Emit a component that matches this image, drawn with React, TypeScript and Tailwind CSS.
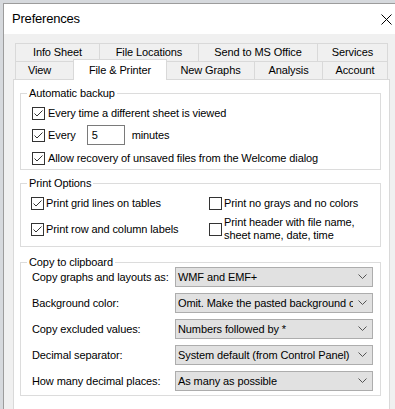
import type { ReactNode } from "react";

function Check({ checked }: { checked: boolean }) {
  return (
    <span className="flex h-[13px] w-[13px] shrink-0 items-center justify-center border border-[#333333] bg-white">
      {checked && (
        <svg width="11" height="11" viewBox="0 0 11 11">
          <path d="M1.5 5.5 L4 8 L9.5 2.5" fill="none" stroke="#333333" strokeWidth="1" />
        </svg>
      )}
    </span>
  );
}

function Group({ title, className, children }: { title: string; className: string; children: ReactNode }) {
  return (
    <div className={`relative w-[361px] border border-[#dcdcdc] ${className}`}>
      <span className="absolute -top-[9px] left-[6px] bg-white px-[2px] leading-[16px]">{title}</span>
      {children}
    </div>
  );
}

function Dropdown({ value }: { value: string }) {
  return (
    <div className="flex h-[20px] w-[198px] items-center border border-[#adadad] bg-[#e1e1e1]">
      <span className="flex-1 overflow-hidden whitespace-nowrap pl-[2px]">{value}</span>
      <svg className="mx-[5px] shrink-0" width="9" height="6" viewBox="0 0 9 6">
        <path d="M0.5 0.5 L4.5 4.5 L8.5 0.5" fill="none" stroke="#555555" strokeWidth="1" />
      </svg>
    </div>
  );
}

const topTabs = [
  { label: "Info Sheet", w: "w-[84px]" },
  { label: "File Locations", w: "w-[99px]" },
  { label: "Send to MS Office", w: "w-[119px]" },
  { label: "Services", w: "w-[71px]" },
];

const clipboardRows = [
  { label: "Copy graphs and layouts as:", value: "WMF and EMF+" },
  { label: "Background color:", value: "Omit. Make the pasted background clear" },
  { label: "Copy excluded values:", value: "Numbers followed by *" },
  { label: "Decimal separator:", value: "System default (from Control Panel)" },
  { label: "How many decimal places:", value: "As many as possible" },
];

export default function App() {
  return (
    <div className="h-[409px] w-[395px] overflow-hidden bg-[#d6d9dd] pl-[3px] pt-[3px] font-['Liberation_Sans',Arial,sans-serif] text-[11px] tracking-[-0.1px] text-black">
      <div className="flex h-full flex-col border-l border-t border-[#9c9c9c] bg-[#f0f0f0]">
        <div className="flex h-[30px] shrink-0 items-center justify-between bg-white pl-[8px] pr-[3px]">
          <span className="text-[13px] tracking-[-0.2px]">Preferences</span>
          <svg width="11" height="11" viewBox="0 0 11 11">
            <path d="M0.5 0.5 L10.5 10.5 M10.5 0.5 L0.5 10.5" stroke="#000000" strokeWidth="1" />
          </svg>
        </div>

        <div className="flex flex-1 flex-col pl-[9px] pt-[9px]">
          <div className="ml-[2px] flex h-[18px] w-[373px]">
            {topTabs.map((t, i) => (
              <div
                key={t.label}
                className={`flex items-center justify-center border-l border-t border-[#d9d9d9] ${t.w} ${i === topTabs.length - 1 ? "border-r" : ""}`}
              >
                {t.label}
              </div>
            ))}
          </div>
          <div className="ml-[2px] flex h-[18px] w-[373px] items-start">
            <div className="flex h-[18px] w-[58px] items-center justify-center border-l border-t border-[#d9d9d9] pr-[10px]">View</div>
            <div className="relative z-10 -mt-[2px] flex h-[21px] w-[94px] items-start justify-center border-x border-t border-[#d9d9d9] bg-white pt-[2px]">
              File &amp; Printer
            </div>
            <div className="flex h-[18px] w-[87px] items-center justify-center border-t border-[#d9d9d9]">New Graphs</div>
            <div className="flex h-[18px] w-[68px] items-center justify-center border-l border-t border-[#d9d9d9]">Analysis</div>
            <div className="flex h-[18px] w-[66px] items-center justify-center border-x border-t border-[#d9d9d9]">Account</div>
          </div>

          <div className="flex w-[377px] flex-1 flex-col border border-b-0 border-[#d9d9d9] bg-white pl-[6px]">
            <Group title="Automatic backup" className="mt-[13px] pl-[11px] pt-[8px]">
              <div className="flex h-[22px] items-center gap-[3px]">
                <Check checked />
                <span>Every time a different sheet is viewed</span>
              </div>
              <div className="flex h-[22px] items-center">
                <Check checked />
                <span className="ml-[3px]">Every</span>
                <div className="ml-[11px] flex h-[20px] w-[38px] items-center border border-[#7a7a7a] bg-white pl-[4px]">5</div>
                <span className="ml-[7px]">minutes</span>
              </div>
              <div className="mt-[2px] flex h-[21px] items-center gap-[3px]">
                <Check checked />
                <span>Allow recovery of unsaved files from the Welcome dialog</span>
              </div>
            </Group>

            <Group title="Print Options" className="mt-[13px] grid grid-cols-[178px_1fr] pb-[3px] pl-[10px] pt-[8px]">
              <div className="flex h-[23px] items-center gap-[2px]">
                <Check checked />
                <span>Print grid lines on tables</span>
              </div>
              <div className="flex h-[23px] items-center gap-[2px]">
                <Check checked={false} />
                <span>Print no grays and no colors</span>
              </div>
              <div className="flex h-[28px] items-center gap-[2px]">
                <Check checked />
                <span>Print row and column labels</span>
              </div>
              <div className="flex h-[28px] items-center gap-[2px]">
                <Check checked={false} />
                <span className="leading-[13px]">
                  Print header with file name,
                  <br />
                  sheet name, date, time
                </span>
              </div>
            </Group>

            <Group title="Copy to clipboard" className="mt-[15px] flex flex-col gap-[6px] pb-[4px] pl-[11px] pt-[4px]">
              {clipboardRows.map((r) => (
                <div key={r.label} className="flex items-center">
                  <span className="w-[143px]">{r.label}</span>
                  <Dropdown value={r.value} />
                </div>
              ))}
            </Group>
          </div>
        </div>
      </div>
    </div>
  );
}
